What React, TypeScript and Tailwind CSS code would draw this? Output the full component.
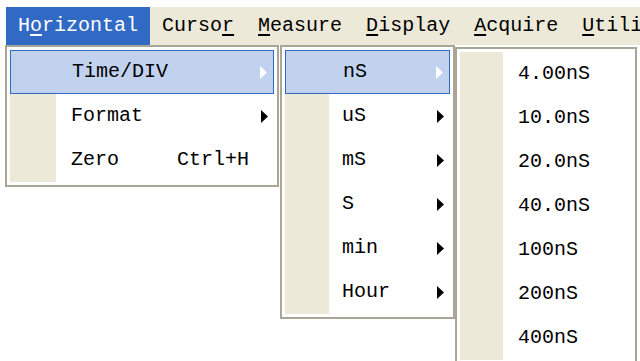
import React from 'react';

const bar = [
  { pre: 'H', key: 'o', post: 'rizontal', active: true },
  { pre: 'Curso', key: 'r', post: '' },
  { pre: '', key: 'M', post: 'easure' },
  { pre: '', key: 'D', post: 'isplay' },
  { pre: '', key: 'A', post: 'cquire' },
  { pre: '', key: 'U', post: 'tili' },
];

function Arrow({ white }: { white?: boolean }) {
  return (
    <svg width="8" height="13" viewBox="0 0 8 13" className="shrink-0">
      <path d="M0 0 L7 6.5 L0 13 Z" fill={white ? '#ffffff' : '#000000'} />
    </svg>
  );
}

type Item = { label: string; shortcut?: string; sub?: boolean; active?: boolean };

function Menu({ items, className, gutter, textPad, shortcutAt }: { items: Item[]; className: string; gutter: string; textPad: string; shortcutAt?: string }) {
  return (
    <div className={`absolute bg-white border-2 border-[#aaa697] p-[3px] ${className}`}>
      {items.map((it) => (
        <div
          key={it.label}
          className={`flex items-center h-[44px] pr-[5px] ${it.active ? 'bg-[#c1d2ee] border border-[#316ac5]' : ''}`}
        >
          <div className={`self-stretch shrink-0 ${gutter} ${it.active ? '' : 'bg-[#ece9d8]'}`} />
          <span className={`${textPad} flex-1 whitespace-pre`}>
            {it.label}
          </span>
          {it.shortcut && <span className={`whitespace-pre ${shortcutAt}`}>{it.shortcut}</span>}
          {it.sub && <Arrow white={it.active} />}
        </div>
      ))}
    </div>
  );
}

export default function App() {
  return (
    <div className="relative w-[640px] h-[361px] bg-white overflow-hidden text-black text-[20px] leading-none font-['Liberation_Mono',monospace]">
      <div className="pt-[7px] pl-[6px]">
        <div className="flex h-[38px] bg-[#ece9d8] whitespace-nowrap overflow-hidden">
          {bar.map((b) => (
            <div
              key={b.post + b.key}
              className={`flex items-center px-3 ${b.active ? 'bg-[#316ac5] text-white' : ''}`}
            >
              {b.pre}
              <span className="underline underline-offset-[3px]">{b.key}</span>
              {b.post}
            </div>
          ))}
        </div>
      </div>

      <Menu
        className="left-[5px] top-[45px] w-[274px]"
        gutter="w-[46px]"
        textPad="pl-[15px]"
        shortcutAt="mr-[20px]"
        items={[
          { label: 'Time/DIV', sub: true, active: true },
          { label: 'Format', sub: true },
          { label: 'Zero', shortcut: 'Ctrl+H' },
        ]}
      />

      <Menu
        className="left-[280px] top-[45px] w-[175px]"
        gutter="w-[44px]"
        textPad="pl-[13px]"
        items={[
          { label: 'nS', sub: true, active: true },
          { label: 'uS', sub: true },
          { label: 'mS', sub: true },
          { label: 'S', sub: true },
          { label: 'min', sub: true },
          { label: 'Hour', sub: true },
        ]}
      />

      <Menu
        className="left-[455px] top-[47px] w-[182px]"
        gutter="w-[43px]"
        textPad="pl-[15px]"
        items={[
          { label: '4.00nS' },
          { label: '10.0nS' },
          { label: '20.0nS' },
          { label: '40.0nS' },
          { label: '100nS' },
          { label: '200nS' },
          { label: '400nS' },
        ]}
      />
    </div>
  );
}
